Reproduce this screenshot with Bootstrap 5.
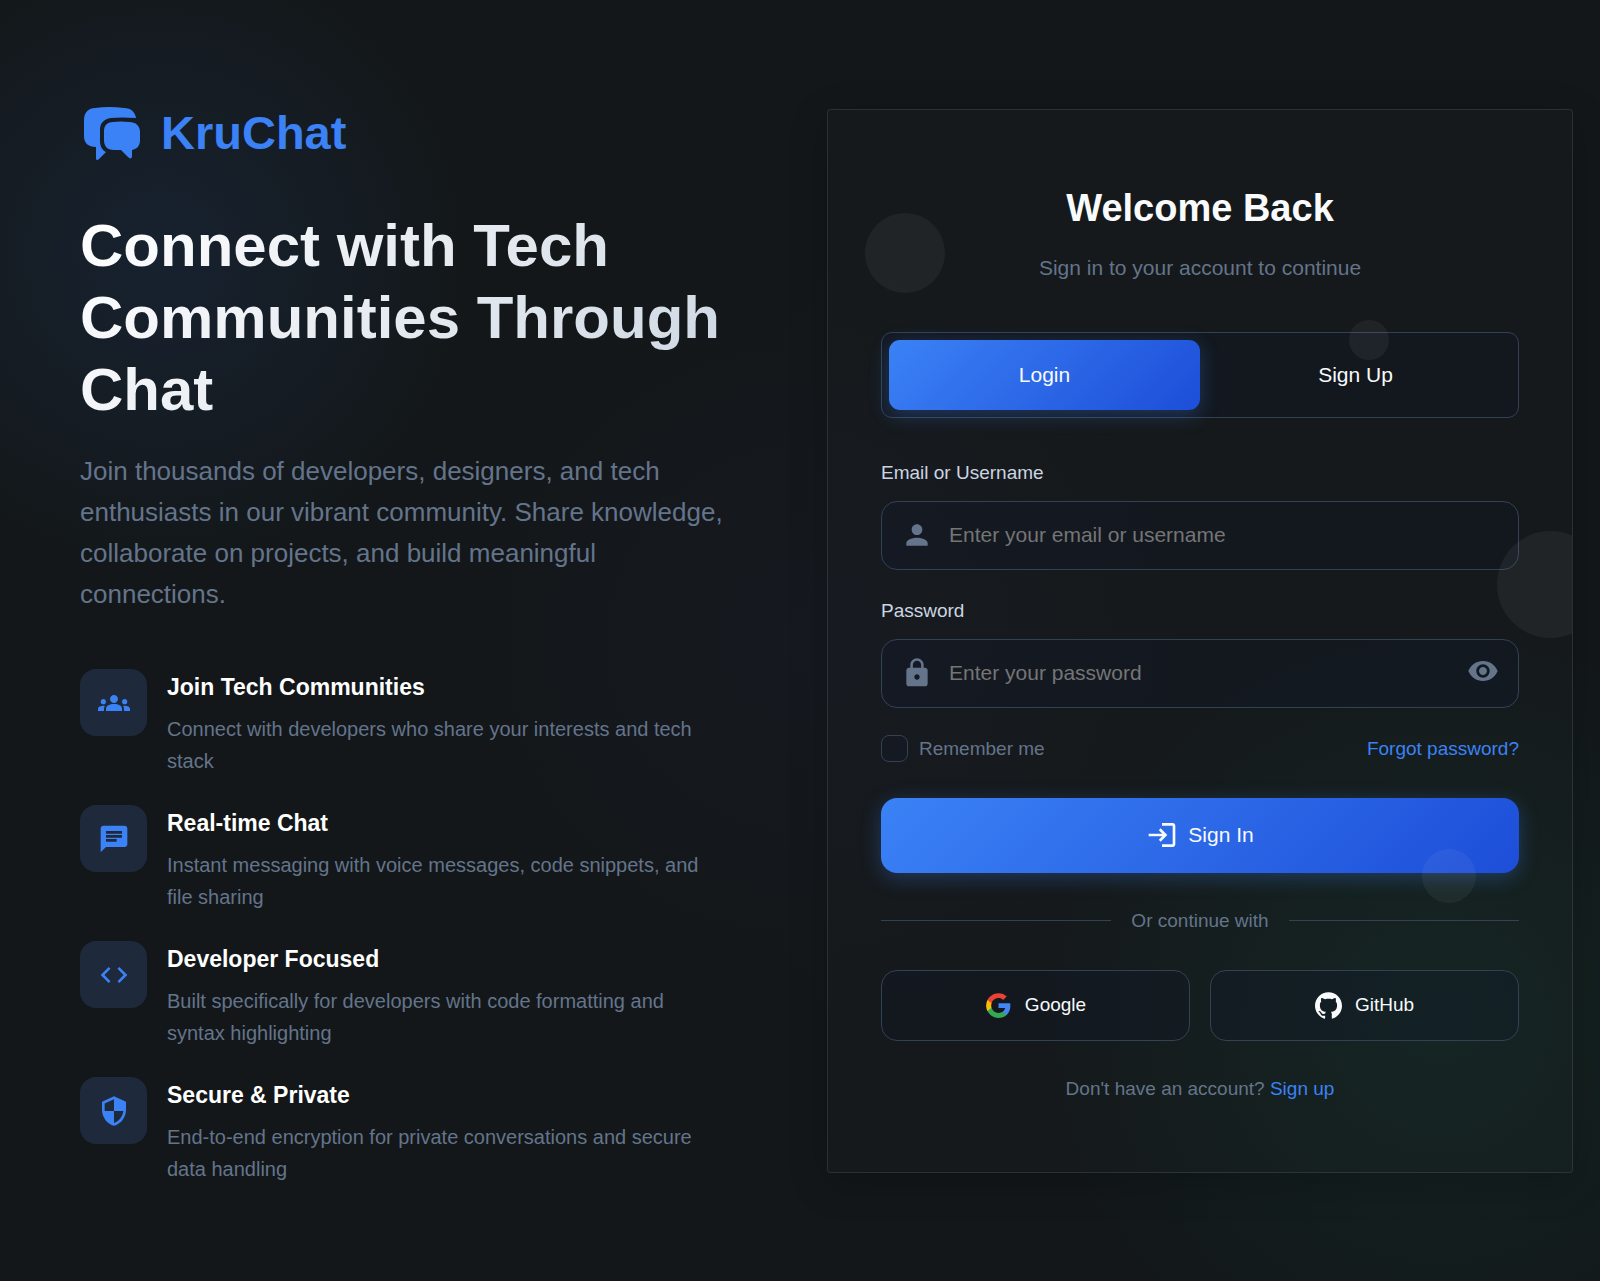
<!DOCTYPE html>
<html lang="en">
<head>
<meta charset="utf-8">
<meta name="viewport" content="width=device-width, initial-scale=1">
<title>KruChat</title>
<link href="https://cdn.jsdelivr.net/npm/bootstrap@5.3.0/dist/css/bootstrap.min.css" rel="stylesheet">
<style>
:root{--blue:#3b82f6;--deep:#1d4ed8;--muted:#64748b;--line:#334155;--pale:#cbd5e1;--pane:#1e293b}
body{font-family:"Liberation Sans",Arial,sans-serif;font-size:20px;line-height:32px;color:#fff;min-height:100vh;
  background:
    radial-gradient(circle at 10% 20%,rgba(59,130,246,.1),transparent 320px),
    radial-gradient(circle at 90% 80%,rgba(16,185,129,.08),transparent 400px),
    radial-gradient(circle at 50% 50%,rgba(99,102,241,.03),transparent 400px),
    #131719}
a{color:var(--blue);text-decoration:none}
svg{flex:none;fill:currentColor}
.intro{padding:45px 72px 40px 80px}
.brand-row{gap:17px;color:var(--blue);margin-bottom:45px}
.brand-name{font-size:47px;line-height:64px;font-weight:700}
.headline{font-size:60px;line-height:72px;font-weight:700;margin-bottom:25px;background:linear-gradient(135deg,#fff,#cbd5e1);-webkit-background-clip:text;background-clip:text;color:transparent}
.pitch{font-size:26px;line-height:41px;color:var(--muted);margin-bottom:54px}
.feature-list{gap:28px;padding-right:8px}
.feature{gap:20px}
.feature-icon{flex:none;width:67px;height:67px;border-radius:16px;background:var(--pane);color:var(--blue)}
.feature-title{font-size:23px;line-height:37px;font-weight:700;margin-bottom:7px}
.muted{color:var(--muted)}
.auth-col{padding:27px}
.auth-card{font-size:19px;border:1px solid rgba(255,255,255,.1);border-radius:4px;padding:67px 53px;background:rgba(255,255,255,.01);box-shadow:0 10px 40px rgba(0,0,0,.2)}
.auth-title{font-size:38px;line-height:62px;font-weight:700;color:#f8fafc;margin-bottom:12px}
.auth-sub{font-size:21px;line-height:34px;margin-bottom:47px}
.switcher{padding:7px;border:1px solid var(--line);border-radius:11px;background:rgba(15,23,42,.3);margin-bottom:39px}
.switcher button{font-size:21px;line-height:34px;padding:18px;border:0;border-radius:11px;color:#f8fafc;background:none}
.switcher .current,.submit-btn{background:linear-gradient(135deg,var(--blue),var(--deep))}
.switcher .current{box-shadow:0 5px 20px rgba(59,130,246,.3)}
.field-label{color:var(--pale);margin-bottom:12px}
.field{margin-bottom:25px}
.field-box .form-control{height:69px;padding:0 67px;font-size:21px;border:1px solid var(--line);border-radius:16px;background:rgba(15,23,42,.3);color:#f8fafc;box-shadow:none}
.field-box .form-control::placeholder{color:#757575}
.field-icon{left:20px;top:18px;color:var(--muted)}
.reveal{right:20px;top:16px;padding:0;border:0;background:none;color:var(--muted);line-height:1}
.options{margin-bottom:33px}
.keep-row{gap:11px}
.options .form-check-input{width:27px;height:27px;margin:0;border:1px solid var(--line);border-radius:8px;background-color:rgba(15,23,42,.3)}
.submit-btn{gap:10px;height:75px;border:0;border-radius:16px;color:#f8fafc;font-size:21px;box-shadow:0 5px 20px rgba(59,130,246,.3);margin-bottom:32px}
.or-row{gap:20px;margin-bottom:33px}
.or-row hr{margin:0;border-color:var(--line);opacity:1}
.social{gap:20px;margin-bottom:32px}
.social button{gap:13px;height:71px;border:1px solid var(--line);border-radius:16px;background:rgba(15,23,42,.3);color:#f8fafc}
.bubble{background:rgba(255,255,255,.05);pointer-events:none;aspect-ratio:1}
.bubble-a{width:80px;left:5%;top:103px}
.bubble-b{width:40px;right:183px;top:210px}
.bubble-c{width:107px;right:-32px;top:421px}
.bubble-d{width:54px;right:96px;bottom:269px}
</style>
</head>
<body>
<main class="container-fluid p-0">
<div class="row g-0 min-vh-100 align-items-center">
  <section class="col-lg-6 intro">
    <div class="d-flex align-items-center brand-row">
      <svg width="64" height="64" viewBox="0 0 64 64" aria-hidden="true">
        <path d="M4 19C4 11 9 7 15 7Q29 5 44 7C51 7 55 11 56 17Q41 16 31 17C23 18 20 23 20 29V40C20 45 22 49 26 51L19 58C17 60 16 59 16 57V46C8 46 4 42 4 35Z"/>
        <path d="M24 30C24 24 28 21 33 21Q41 20 49 21C56 21 60 25 60 31V39C60 45 57 48 52 49V55C52 58 50 58 48 56L41 49H34C27 49 24 45 24 39Z"/>
      </svg>
      <span class="brand-name">KruChat</span>
    </div>
    <h1 class="headline">Connect with Tech Communities Through Chat</h1>
    <p class="pitch">Join thousands of developers, designers, and tech enthusiasts in our vibrant community. Share knowledge, collaborate on projects, and build meaningful connections.</p>
    <div class="d-flex flex-column feature-list">
      <div class="d-flex feature">
        <div class="feature-icon d-flex align-items-center justify-content-center">
          <svg width="32" height="32" viewBox="0 0 24 24" aria-hidden="true"><path d="M12 12.750c1.630 0 3.070.39 4.240.9 1.080.48 1.760 1.560 1.760 2.730V18H6v-1.610c0-1.180.68-2.260 1.760-2.730 1.170-.52 2.610-.91 4.240-.91zM4 13c1.100 0 2-.9 2-2s-.9-2-2-2-2 .9-2 2 .9 2 2 2zm1.130 1.100C4.760 14.040 4.390 14 4 14c-.99 0-1.930.21-2.780.58C.48 14.900 0 15.620 0 16.430V18h4.500v-1.610c0-.83.23-1.610.63-2.290zM20 13c1.100 0 2-.9 2-2s-.9-2-2-2-2 .9-2 2 .9 2 2 2zm4 3.430c0-.81-.48-1.530-1.220-1.850C21.930 14.210 20.990 14 20 14c-.39 0-.76.04-1.130.1.4.68.63 1.460.63 2.290V18H24v-1.570zM12 6c1.660 0 3 1.340 3 3s-1.340 3-3 3-3-1.340-3-3 1.340-3 3-3z"/></svg>
        </div>
        <div><h2 class="feature-title">Join Tech Communities</h2><p class="muted mb-0">Connect with developers who share your interests and tech stack</p></div>
      </div>
      <div class="d-flex feature">
        <div class="feature-icon d-flex align-items-center justify-content-center">
          <svg width="32" height="32" viewBox="0 0 24 24" aria-hidden="true"><path d="M20 2H4c-1.100 0-1.990.9-1.990 2L2 22l4-4h14c1.100 0 2-.9 2-2V4c0-1.100-.9-2-2-2zM6 9h12v2H6V9zm8 5H6v-2h8v2zm4-6H6V6h12v2z"/></svg>
        </div>
        <div><h2 class="feature-title">Real-time Chat</h2><p class="muted mb-0">Instant messaging with voice messages, code snippets, and file sharing</p></div>
      </div>
      <div class="d-flex feature">
        <div class="feature-icon d-flex align-items-center justify-content-center">
          <svg width="32" height="32" viewBox="0 0 24 24" aria-hidden="true"><path d="M9.400 16.600L4.800 12l4.600-4.600L8 6l-6 6 6 6 1.400-1.400zm5.200 0l4.600-4.600-4.600-4.600L16 6l6 6-6 6-1.400-1.400z"/></svg>
        </div>
        <div><h2 class="feature-title">Developer Focused</h2><p class="muted mb-0">Built specifically for developers with code formatting and syntax highlighting</p></div>
      </div>
      <div class="d-flex feature">
        <div class="feature-icon d-flex align-items-center justify-content-center">
          <svg width="32" height="32" viewBox="0 0 24 24" aria-hidden="true"><path d="M12 1L3 5v6c0 5.550 3.840 10.740 9 12 5.160-1.260 9-6.450 9-12V5l-9-4zm0 10.990h7c-.53 4.120-3.280 7.790-7 8.940V12H5V6.300l7-3.110v8.800z"/></svg>
        </div>
        <div><h2 class="feature-title">Secure &amp; Private</h2><p class="muted mb-0">End-to-end encryption for private conversations and secure data handling</p></div>
      </div>
    </div>
  </section>

  <section class="col-lg-6 auth-col">
    <div class="auth-card position-relative overflow-hidden">
      <h2 class="auth-title text-center">Welcome Back</h2>
      <p class="auth-sub muted text-center">Sign in to your account to continue</p>
      <div class="switcher d-flex">
        <button type="button" class="current flex-fill w-50">Login</button>
        <button type="button" class="flex-fill w-50">Sign Up</button>
      </div>
      <form>
        <div class="field">
          <label class="field-label d-block" for="user">Email or Username</label>
          <div class="field-box position-relative">
            <input class="form-control" id="user" type="text" placeholder="Enter your email or username">
            <svg class="field-icon position-absolute" width="32" height="32" viewBox="0 0 24 24" aria-hidden="true"><path d="M12 12c2.210 0 4-1.790 4-4s-1.790-4-4-4-4 1.790-4 4 1.790 4 4 4zm0 2c-2.670 0-8 1.340-8 4v2h16v-2c0-2.660-5.330-4-8-4z"/></svg>
          </div>
        </div>
        <div class="field">
          <label class="field-label d-block" for="pass">Password</label>
          <div class="field-box position-relative">
            <input class="form-control" id="pass" type="password" placeholder="Enter your password">
            <svg class="field-icon position-absolute" width="32" height="32" viewBox="0 0 24 24" aria-hidden="true"><path d="M18 8h-1V6c0-2.760-2.240-5-5-5S7 3.240 7 6v2H6c-1.100 0-2 .9-2 2v10c0 1.100.9 2 2 2h12c1.100 0 2-.9 2-2V10c0-1.100-.9-2-2-2zm-6 9c-1.100 0-2-.9-2-2s.9-2 2-2 2 .9 2 2-.9 2-2 2zm3.100-9H8.900V6c0-1.710 1.390-3.100 3.100-3.100s3.100 1.390 3.100 3.100v2z"/></svg>
            <button type="button" class="reveal position-absolute" aria-label="Show password"><svg class="d-block" width="32" height="32" viewBox="0 0 24 24" aria-hidden="true"><path d="M12 4.500C7 4.500 2.730 7.610 1 12c1.730 4.390 6 7.500 11 7.500s9.270-3.110 11-7.500c-1.730-4.390-6-7.500-11-7.500zM12 17c-2.760 0-5-2.240-5-5s2.240-5 5-5 5 2.240 5 5-2.240 5-5 5zm0-8c-1.660 0-3 1.340-3 3s1.340 3 3 3 3-1.340 3-3-1.340-3-3-3z"/></svg></button>
          </div>
        </div>
        <div class="options d-flex justify-content-between align-items-center">
          <div class="keep-row d-flex align-items-center">
            <input class="form-check-input" type="checkbox" id="keep">
            <label class="muted" for="keep">Remember me</label>
          </div>
          <a href="#">Forgot password?</a>
        </div>
        <button type="submit" class="submit-btn w-100 d-flex align-items-center justify-content-center">
          <svg width="32" height="32" viewBox="0 0 24 24" aria-hidden="true"><path d="M11 7L9.600 8.400l2.600 2.600H2v2h10.200l-2.600 2.600L11 17l5-5-5-5zm9 12h-8v2h8c1.100 0 2-.9 2-2V5c0-1.100-.9-2-2-2h-8v2h8v14z"/></svg>
          Sign In
        </button>
      </form>
      <div class="or-row muted d-flex align-items-center"><hr class="flex-fill">Or continue with<hr class="flex-fill"></div>
      <div class="social d-flex">
        <button type="button" class="w-50 d-flex align-items-center justify-content-center">
          <svg width="27" height="27" viewBox="0 0 24 24" aria-hidden="true"><path fill="#4285f4" d="M22.560 12.250c0-.78-.07-1.530-.2-2.250H12v4.260h5.920c-.26 1.370-1.040 2.530-2.210 3.310v2.770h3.570c2.080-1.920 3.280-4.740 3.280-8.090z"/><path fill="#34a853" d="M12 23c2.970 0 5.460-.98 7.280-2.660l-3.570-2.770c-.98.66-2.230 1.060-3.710 1.060-2.860 0-5.290-1.930-6.160-4.530H2.180v2.840C3.990 20.530 7.700 23 12 23z"/><path fill="#fbbc05" d="M5.840 14.090c-.22-.66-.35-1.360-.35-2.090s.13-1.430.35-2.090V7.070H2.180C1.430 8.550 1 10.220 1 12s.43 3.450 1.180 4.930l3.660-2.840z"/><path fill="#ea4335" d="M12 5.380c1.620 0 3.060.56 4.210 1.640l3.150-3.150C17.450 2.090 14.970 1 12 1 7.700 1 3.990 3.470 2.180 7.070l3.660 2.840C6.710 7.310 9.140 5.380 12 5.380z"/></svg>
          Google
        </button>
        <button type="button" class="w-50 d-flex align-items-center justify-content-center">
          <svg width="27" height="27" viewBox="0 0 24 24" aria-hidden="true"><path d="M12 .297c-6.630 0-12 5.373-12 12 0 5.303 3.438 9.800 8.205 11.385.6.113.82-.258.82-.577 0-.285-.01-1.040-.015-2.040-3.338.724-4.042-1.610-4.042-1.610C4.422 18.070 3.633 17.700 3.633 17.700c-1.087-.744.084-.729.084-.729 1.205.084 1.838 1.236 1.838 1.236 1.070 1.835 2.809 1.305 3.495.998.108-.776.417-1.305.76-1.605-2.665-.3-5.466-1.332-5.466-5.930 0-1.310.465-2.380 1.235-3.220-.135-.303-.54-1.523.105-3.176 0 0 1.005-.322 3.300 1.230.96-.267 1.980-.399 3-.405 1.020.006 2.040.138 3 .405 2.280-1.552 3.285-1.230 3.285-1.230.645 1.653.24 2.873.12 3.176.765.84 1.230 1.910 1.230 3.220 0 4.610-2.805 5.625-5.475 5.920.42.36.81 1.096.81 2.220 0 1.606-.015 2.896-.015 3.286 0 .315.21.69.825.57C20.565 22.092 24 17.592 24 12.297c0-6.627-5.373-12-12-12"/></svg>
          GitHub
        </button>
      </div>
      <p class="muted text-center mb-0">Don't have an account? <a href="#">Sign up</a></p>
      <span class="bubble bubble-a rounded-circle position-absolute"></span>
      <span class="bubble bubble-b rounded-circle position-absolute"></span>
      <span class="bubble bubble-c rounded-circle position-absolute"></span>
      <span class="bubble bubble-d rounded-circle position-absolute"></span>
    </div>
  </section>
</div>
</main>
<script src="https://cdn.jsdelivr.net/npm/bootstrap@5.3.0/dist/js/bootstrap.bundle.min.js"></script>
</body>
</html>
